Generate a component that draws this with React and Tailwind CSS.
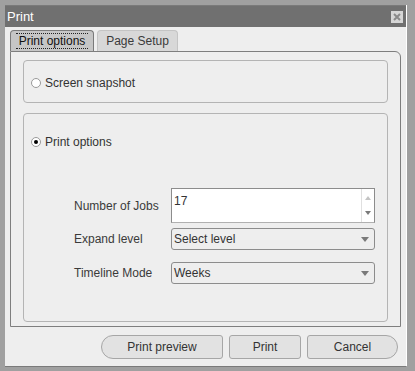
import React from "react";

const font = { fontFamily: '"Liberation Sans", Arial, sans-serif' };

const Radio = ({ checked }) => (
  <span className="w-[10px] h-[10px] rounded-full border border-[#9a9a9a] bg-white flex items-center justify-center shrink-0">
    {checked && <span className="w-[4px] h-[4px] rounded-full bg-black" />}
  </span>
);

const Arrow = () => (
  <svg width="8" height="5" viewBox="0 0 8 5" className="shrink-0">
    <path d="M0 0h8L4 5z" fill="#7a7a7a" />
  </svg>
);

const SelectBox = ({ value }) => (
  <div className="w-[204px] h-[22px] border border-[#8c8c8c] rounded-[3px] bg-[#eeeeee] flex items-center justify-between pl-[2px] pr-[5px] text-[12px] text-[#333]">
    <span>{value}</span>
    <Arrow />
  </div>
);

const Row = ({ label, children, className }) => (
  <div className={"flex items-center " + (className || "")}>
    <span className="w-[97px] text-[12px] text-[#3a3a3a]">{label}</span>
    {children}
  </div>
);

export default function App() {
  return (
    <div className="w-[415px] h-[371px] bg-[#a0a0a0] pt-[5px] pl-[5px] overflow-hidden" style={font}>
      <div className="flex">
        <div className="w-[401px] h-[362px] bg-[#eeeeee] border-t border-b border-[#7a7a7a] flex flex-col">
          <div className="h-[21px] bg-[#707070] flex items-center justify-between pl-[2px] pr-[3px]">
            <span className="text-white text-[13px] leading-none">Print</span>
            <span className="w-[12px] h-[12px] bg-[#d6d6d6] flex items-center justify-center">
              <svg width="8" height="8" viewBox="0 0 8 8">
                <path d="M1 1l6 6M7 1L1 7" stroke="#8a8a8a" strokeWidth="2" />
              </svg>
            </span>
          </div>

          <div className="pl-[5px] pt-[3px]">
            <div className="flex items-end gap-[3px] h-[21px]">
              <div className="w-[84px] h-[21px] rounded-t-[4px] border border-b-0 border-[#7a7a7a] bg-[#c6c6c6] flex items-center justify-center">
                <span className="text-[12px] text-[#111] leading-[14px] px-[3px] border-y border-dotted border-[#222]">
                  Print options
                </span>
              </div>
              <div className="w-[81px] h-[21px] rounded-t-[4px] border border-b-0 border-[#c4c4c4] bg-[#d8d8d8] flex items-center justify-center">
                <span className="text-[12px] text-[#3a3a3a]">Page Setup</span>
              </div>
            </div>

            <div className="w-[391px] h-[276px] border border-[#7e7e7e] rounded-tr-[6px] px-[12px] pt-[8px] flex flex-col gap-[10px]">
              <div className="h-[43px] border border-[#b4b4b4] rounded-[4px] flex items-center gap-[4px] pl-[7px] pt-[3px]">
                <Radio />
                <span className="text-[12px] text-[#333]">Screen snapshot</span>
              </div>

              <div className="h-[209px] border border-[#b4b4b4] rounded-[4px] pt-[20px]">
                <div className="flex items-center gap-[4px] pl-[7px] h-[16px]">
                  <Radio checked />
                  <span className="text-[12px] text-[#333]">Print options</span>
                </div>

                <div className="pl-[50px] pt-[38px] flex flex-col">
                  <Row label="Number of Jobs">
                    <div className="w-[204px] h-[35px] border border-[#8c8c8c] border-b-[#b0b0b0] bg-white flex justify-between">
                      <span className="text-[12px] text-[#333] pl-[2px] pt-[6px] leading-none">17</span>
                      <div className="w-[12px] border-l border-[#e0e0e0] flex flex-col items-center justify-between py-[7px] mr-[1px]">
                        <svg width="6" height="4" viewBox="0 0 6 4">
                          <path d="M3 0L6 4H0z" fill="#c4c4c4" />
                        </svg>
                        <svg width="6" height="4" viewBox="0 0 6 4">
                          <path d="M0 0h6L3 4z" fill="#7a7a7a" />
                        </svg>
                      </div>
                    </div>
                  </Row>
                  <Row label="Expand level" className="mt-[5px]">
                    <SelectBox value="Select level" />
                  </Row>
                  <Row label="Timeline Mode" className="mt-[12px]">
                    <SelectBox value="Weeks" />
                  </Row>
                </div>
              </div>
            </div>

            <div className="flex justify-end gap-[6px] pr-[8px] mt-[8px]">
              <button className="w-[122px] h-[24px] rounded-l-[12px] rounded-r-[3px] border border-[#a6a6a6] bg-[#e2e2e2] text-[12px] text-[#333]">
                Print preview
              </button>
              <button className="w-[72px] h-[24px] rounded-[3px] border border-[#a6a6a6] bg-[#e2e2e2] text-[12px] text-[#333]">
                Print
              </button>
              <button className="w-[91px] h-[24px] rounded-r-[12px] rounded-l-[3px] border border-[#a6a6a6] bg-[#e2e2e2] text-[12px] text-[#333]">
                Cancel
              </button>
            </div>
          </div>
        </div>
        <div className="w-[1px] h-[361px] bg-white" />
      </div>
    </div>
  );
}
